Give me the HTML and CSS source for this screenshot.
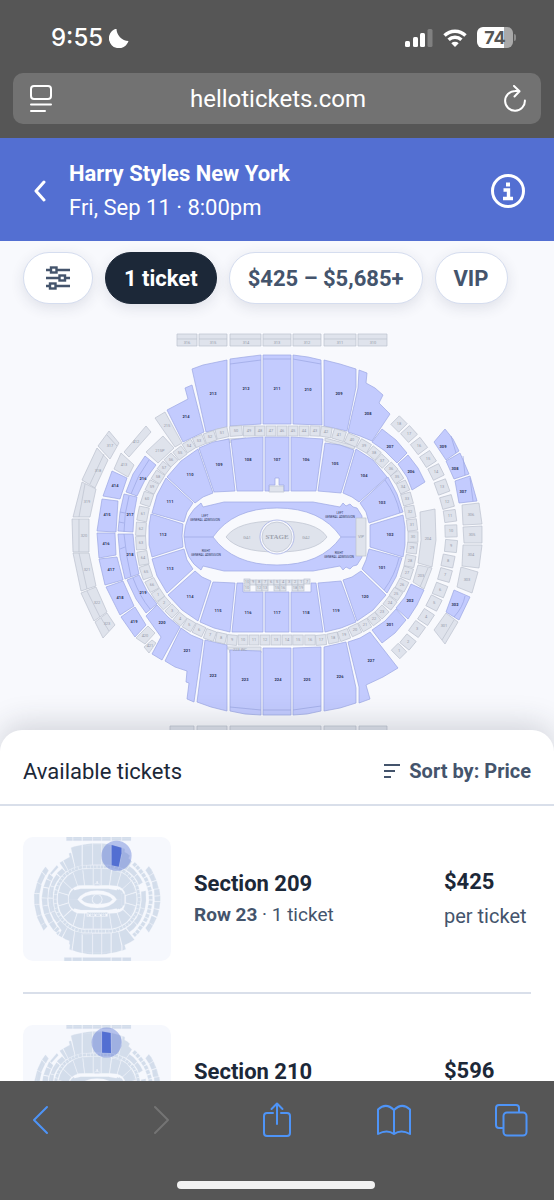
FILE: index.html
```html
<!DOCTYPE html>
<html lang="en">
<head>
  <meta charset="UTF-8">
  <meta name="viewport" content="width=device-width, initial-scale=1">
  <title>Harry Styles New York</title>
  <link rel="stylesheet" href="styles.css">
</head>
<body>
  <div class="browser-top">
    <div class="status">
      <span class="time">9:55</span>
      <svg class="moon" width="20" height="20" viewBox="0 0 20 20"><path d="M7.500 0.500A10 10 0 1 0 19.500 13A12.500 12.500 0 0 1 7.500 .5Z" fill="#fff"/></svg>
      <span class="spacer"></span>
      <svg width="28" height="20" viewBox="0 0 28 20" fill="#fff">
        <rect x="0" y="13" width="5" height="6" rx="1.500"/>
        <rect x="8" y="9" width="5" height="10" rx="1.500"/>
        <rect x="15" y="5" width="5" height="14" rx="1.500"/>
        <rect x="22.500" y="1" width="5" height="18" rx="1.500" opacity=".25"/>
      </svg>
      <svg width="24" height="20" viewBox="0 0 24 20" fill="none" stroke="#fff" stroke-width="3.400">
        <path d="M1.500 7.500A15 15 0 0 1 22.500 7.500"/>
        <path d="M5.600 11.800A9.300 9.300 0 0 1 18.400 11.800"/>
        <path d="M12 19L8.300 15.200A5.500 5.500 0 0 1 15.700 15.200Z" fill="#fff" stroke="none"/>
      </svg>
      <span class="battery">74</span>
    </div>
    <div class="url-bar">
      <button type="button" aria-label="Page settings">
        <svg width="22" height="28" viewBox="0 0 22 28" fill="none" stroke="#fff" stroke-width="2" stroke-linecap="round"><rect x="1" y="1" width="20" height="13" rx="3"/><path d="M1 19.500H21M1 26H15"/></svg>
      </button>
      <input type="text" value="hellotickets.com" aria-label="Address">
      <button type="button" aria-label="Reload">
        <svg width="22" height="28" viewBox="0 0 22 28" fill="none" stroke="#fff" stroke-width="2" stroke-linecap="round" stroke-linejoin="round"><path d="M15.500 6.300Q13 5.900 11 6A9.900 9.900 0 1 0 20.900 15.500M10 1L15.500 6.300L10.500 11.500"/></svg>
      </button>
    </div>
  </div>

  <header class="event">
    <a class="back" href="#" aria-label="Back"><svg width="12" height="24" viewBox="0 0 12 24" fill="none" stroke="#fff" stroke-width="3" stroke-linecap="round" stroke-linejoin="round"><path d="M10 3L2 12L10 21"/></svg></a>
    <div class="event-text">
      <h1>Harry Styles New York</h1>
      <p>Fri, Sep 11 · 8:00pm</p>
    </div>
    <button class="info" type="button" aria-label="Event info">
      <svg width="36" height="36" viewBox="0 0 36 36" fill="none" stroke="#fff"><circle cx="18" cy="18" r="15.500" stroke-width="3"/><path d="M13.500 17H18.500V25M13 25.500H23" stroke-width="3.400"/><path d="M16 9.500H20V13.500H16Z" fill="#fff" stroke="none"/></svg>
    </button>
  </header>

  <main>
    <section class="venue">
      <div class="filters">
        <button class="chip" type="button" aria-label="Filters">
          <svg width="24" height="24" viewBox="0 0 24 24" fill="none" stroke="#44546c" stroke-width="2.400"><path d="M0 4H5M11 4H24M0 12H13M19 12H24M0 20H4M10 20H24"/><rect x="5" y="1.500" width="5.500" height="5"/><rect x="13.500" y="9.500" width="5.500" height="5"/><rect x="4" y="17.500" width="5.500" height="5"/></svg>
        </button>
        <button class="chip active" type="button">1 ticket</button>
        <button class="chip" type="button">$425 – $5,685+</button>
        <button class="chip" type="button">VIP</button>
      </div>
      <svg class="map" viewBox="0 241 554 513" role="img" aria-label="Seating map">
        <g id="arena"></g>
        <g id="labels"></g>
      </svg>
    </section>

    <section class="sheet">
      <div class="sheet-head">
        <h2>Available tickets</h2>
        <button class="sort" type="button">
          <svg width="16" height="16" viewBox="0 0 16 16" fill="none" stroke="#44546c" stroke-width="2"><path d="M0 2H16M0 8H11M0 14H7"/></svg>
          Sort by: Price
        </button>
      </div>
      <ul class="tickets">
        <li>
          <svg class="thumb" viewBox="38 334 477 403">
            <use href="#arena"/>
            <circle class="halo" cx="340" cy="395" r="49"/>
            <path class="pick" d="M324 360L356 369V387L347 431L324 426Z"/>
          </svg>
          <div class="seat">
            <h3>Section 209</h3>
            <p><b>Row 23</b> · 1 ticket</p>
          </div>
          <div class="price">
            <strong>$425</strong>
            <span>per ticket</span>
          </div>
        </li>
        <li>
          <svg class="thumb" viewBox="38 334 477 403">
            <use href="#arena"/>
            <circle class="halo" cx="308" cy="391" r="49"/>
            <path class="pick" d="M293 355L321 360L322 425L293 424Z"/>
          </svg>
          <div class="seat">
            <h3>Section 210</h3>
          </div>
          <div class="price">
            <strong>$596</strong>
          </div>
        </li>
      </ul>
    </section>
  </main>

  <nav class="toolbar">
    <div class="tools">
      <button type="button" aria-label="Previous page"><svg width="36" height="36" viewBox="0 0 36 36"><path d="M24 5L11 18L24 31"/></svg></button>
      <button type="button" aria-label="Next page" disabled><svg width="36" height="36" viewBox="0 0 36 36"><path d="M14 5L27 18L14 31"/></svg></button>
      <button type="button" aria-label="Share"><svg width="36" height="36" viewBox="0 0 36 36"><path d="M15 11H9Q6 11 6 14V31Q6 34 9 34H29Q32 34 32 31V14Q32 11 29 11H23M19 22V2M13.500 7L19 1.500L24.500 7"/></svg></button>
      <button type="button" aria-label="Bookmarks"><svg width="36" height="36" viewBox="0 0 36 36"><path d="M18 8Q10 0 2 7.500V32Q11 27 18 32Q25 27 34 32V7.500Q26 0 18 8ZM18 8V32"/></svg></button>
      <button type="button" aria-label="Tabs"><svg width="36" height="36" viewBox="0 0 36 36"><path d="M9.500 26H6Q3 26 3 23V6Q3 3 6 3H23Q26 3 26 6V9.500"/><rect x="10.500" y="10.500" width="23" height="23" rx="3.500"/></svg></button>
    </div>
    <div class="home"></div>
  </nav>
  <script src="map.js"></script>
</body>
</html>
```

FILE: styles.css
```css
* {
  box-sizing: border-box;
}
body {
  margin: 0;
  height: 100vh;
  display: flex;
  flex-direction: column;
  font-family: Roboto, "Liberation Sans", sans-serif;
  color: #1c2838;
  background: #fff;
}
h1, h2, h3, p, ul {
  margin: 0;
  padding: 0;
}
button {
  font: inherit;
  color: inherit;
  background: none;
  border: 0;
  padding: 0;
}
svg {
  display: block;
}

/* browser chrome */
.browser-top {
  background: #565656;
  padding: 0 13px 14px;
  font-family: Inter, "Liberation Sans", sans-serif;
  color: #fff;
}
.status {
  height: 73px;
  padding: 2px 28px 0 38px;
  display: flex;
  align-items: center;
  gap: 10px;
}
.time {
  font-size: 24px;
  font-weight: 500;
}
.moon {
  margin-left: -4px;
}
.spacer {
  flex: 1;
}
.battery {
  position: relative;
  width: 36px;
  height: 21px;
  border-radius: 6px;
  background: linear-gradient(90deg, #fff 74%, #a9a9a9 74%);
  color: #565656;
  font-size: 18px;
  font-weight: 700;
  line-height: 21px;
  text-align: center;
}
.battery::after {
  content: "";
  position: absolute;
  right: -3px;
  top: 7px;
  width: 2px;
  height: 7px;
  border-radius: 0 2px 2px 0;
  background: #8d8d8d;
}
.url-bar {
  height: 51px;
  border-radius: 10px;
  background: #727272;
  display: flex;
  align-items: center;
  padding: 0 15px 0 17px;
}
.url-bar input {
  flex: 1;
  min-width: 0;
  border: 0;
  background: none;
  color: #fff;
  font-family: Roboto, "Liberation Sans", sans-serif;
  font-size: 24px;
  text-align: center;
}

/* event header */
.event {
  background: #536fd2;
  color: #fff;
  height: 103px;
  flex: none;
  display: flex;
  align-items: center;
  padding: 2px 28px 0 34px;
}
.event-text {
  flex: 1;
  margin-left: 23px;
}
.event h1 {
  font-size: 22px;
  font-weight: 700;
  line-height: 34px;
}
.event p {
  font-size: 22px;
  line-height: 34px;
}

main {
  flex: 1;
  min-height: 0;
  overflow: hidden;
}
.venue {
  position: relative;
  background: #f8f9fd;
}
.map {
  width: 100%;
  height: auto;
  --open: #c3cbfe;
  --open-line: #9ba6e2;
  --closed: #dfe3ec;
  --closed-line: #bcc2cf;
  --paper: #f8f9fd;
}
.filters {
  position: absolute;
  top: 11px;
  left: 23px;
  right: 0;
  display: flex;
  gap: 12px;
}
.chip {
  height: 52px;
  padding: 0 18px;
  border: 1px solid #d5ddef;
  border-radius: 26px;
  background: #fff;
  color: #44546c;
  font-size: 22px;
  font-weight: 700;
  box-shadow: 0 4px 14px rgba(40, 50, 80, 0.12);
}
.chip svg {
  margin: 0 4px;
}
.chip.active {
  background: #1c2838;
  border-color: #1c2838;
  color: #fff;
}

/* seating map */
.open {
  fill: var(--open);
  stroke: var(--open-line);
  stroke-width: 0.7;
}
.closed {
  fill: var(--closed);
  stroke: var(--closed-line);
  stroke-width: 0.7;
}
.paper {
  fill: var(--paper);
  stroke: var(--open-line);
  stroke-width: 0.7;
}
.band {
  fill: none;
  stroke: var(--open-line);
  stroke-width: 0.7;
}
.band.off {
  stroke: var(--closed-line);
}
#labels text {
  font-size: 4px;
  text-anchor: middle;
  fill: #969ba8;
}
#labels .on {
  font-weight: 700;
  fill: #2b3358;
}
#labels .tiny {
  font-size: 3px;
  fill: #2b3358;
}
#labels .stage {
  font-family: "Liberation Serif", serif;
  font-size: 7px;
  font-weight: 700;
  fill: #9da2ad;
}

/* ticket list */
.sheet {
  position: relative;
  margin-top: -24px;
  background: #fff;
  border-radius: 22px 22px 0 0;
  box-shadow: 0 -6px 30px rgba(40, 45, 60, 0.18);
}
.sheet-head {
  height: 76px;
  padding: 8px 23px 0;
  border-bottom: 2px solid #d9dfea;
  display: flex;
  align-items: center;
  justify-content: space-between;
}
.sheet-head h2 {
  font-size: 22px;
  font-weight: 400;
}
.sort {
  display: flex;
  align-items: center;
  gap: 9px;
  font-size: 20px;
  font-weight: 700;
  color: #44546c;
}
.tickets {
  list-style: none;
  padding: 0 23px;
}
.tickets li {
  display: flex;
  align-items: center;
  padding: 31px 0;
  border-bottom: 2px solid #d9dfea;
}
.thumb {
  width: 148px;
  height: 124px;
  flex: none;
  border-radius: 10px;
  background: #f6f8fd;
  --open: #d3ddeb;
  --open-line: #e6ecf5;
  --closed: #d3ddeb;
  --closed-line: #e6ecf5;
  --paper: #f6f8fd;
}
.halo {
  fill: #536fd2;
  opacity: 0.4;
}
.pick {
  fill: #536fd2;
}
.seat {
  flex: 1;
  min-height: 62px;
  margin-left: 23px;
}
.seat h3 {
  font-size: 22px;
  line-height: 32px;
}
.seat p {
  font-size: 19px;
  line-height: 30px;
  color: #44546c;
}
.price {
  width: 87px;
  min-height: 66px;
}
.price strong, .price span {
  display: block;
  white-space: nowrap;
}
.price strong {
  font-size: 22px;
  line-height: 34px;
}
.price span {
  font-size: 20px;
  line-height: 34px;
  color: #44546c;
}

/* bottom toolbar */
.toolbar {
  flex: none;
  height: 119px;
  background: #565656;
  padding: 21px 25px 0 23px;
}
.tools {
  display: flex;
  justify-content: space-between;
}
.tools svg {
  fill: none;
  stroke: #4e94f7;
  stroke-width: 2;
  stroke-linecap: round;
  stroke-linejoin: round;
}
.tools button:disabled svg {
  stroke: #747474;
}
.home {
  width: 198px;
  height: 8px;
  margin: 43px auto 0;
  border-radius: 4px;
  background: #f2f2f2;
}
```

FILE: map.js
```js
const arena = document.getElementById('arena');
const labels = document.getElementById('labels');
let shapes = '';
let texts = '';

function label(text, x, y, cls) {
  texts += `<text class="${cls || ''}" x="${x}" y="${y + 1.4}">${text}</text>`;
}

// name, points, label position
const open = [
  ['213', '192,369 203,365 227,360 227,427 206,432', 213, 394],
  ['212', '230,359 245,357 261,355 261,424 230,426', 246, 389],
  ['211', '263,355 291,355 291,424 263,424', 277, 389],
  ['210', '293,355 308,357 321,360 322,425 293,424', 308, 390],
  ['209', '324,360 340,364 356,369 356,387 347,431 324,426', 339, 394],
  ['208', '359,370 367,373 366,383 375,388 383,395 379,403 390,414 372,441 360,436 348,432 358,388', 368, 414],
  ['207', '382,429 396,440 407,453 397,463 385,451 372,442', 390, 447],
  ['206', '408,455 418,468 425,482 412,490 407,477 398,464', 411, 472],
  ['214', '185,388 192,385 204,432 183,442 167,410 188,399', 186, 417],
  ['216', '145,456 156,465 145,480 137,496 126,492 133,474', 143, 479],
  ['217', '124,494 137,497 134,514 133,532 118,531 120,512', 130, 515],
  ['218', '118,534 133,534 135,555 139,574 125,579 120,557', 130, 555],
  ['219', '127,580 139,575 147,591 157,604 146,613 136,599', 143, 593],
  ['220', '157,605 168,617 180,627 162,660 152,654 161,637 146,616', 162, 623],
  ['221', '181,628 191,635 203,640 194,702 187,699 189,683 186,682 187,671 175,667 165,661', 187, 651],
  ['222', '205,640 227,645 227,711 211,707 197,702', 213, 676],
  ['223', '230,650 261,651 261,715 245,714 230,711', 245, 680],
  ['224', '263,648 291,648 291,715 263,715', 278, 680],
  ['225', '293,648 321,647 321,711 307,714 293,715', 307, 680],
  ['226', '324,647 346,642 356,688 356,703 340,708 324,711', 340, 677],
  ['227', '348,642 360,638 370,632 398,668 383,677 366,685 370,699 359,703 359,687', 371, 661],
  ['201', '372,630 385,621 396,609 406,620 395,633 382,643', 390, 625],
  ['202', '396,608 405,597 411,584 424,590 417,605 408,619', 410, 601],
  ['107', '265,437 289,437 289,491 284,491 284,485 279,485 279,478 275,478 275,485 269,485 269,491 265,491', 277, 460],
  ['108', '231,440 246,438 263,437 263,491 237,491', 248, 460],
  ['109', '199,448 213,442 229,439 235,491 214,492', 219, 465],
  ['110', '198,449 213,493 203,497 195,503 167,477 181,461', 190, 475],
  ['111', '166,478 193,503 187,512 184,522 152,513 157,495', 170, 502],
  ['112', '151,514 183,524 182,536 183,547 152,557 149,545 149,526', 163, 535],
  ['113', '152,559 184,549 187,560 193,569 167,593 157,576', 170, 569],
  ['114', '195,571 202,577 211,581 198,621 182,610 168,595', 190, 597],
  ['115', '213,582 235,583 230,632 214,628 200,622', 218, 611],
  ['116', '237,583 243,583 243,592 263,592 263,632 232,632', 248, 613],
  ['117', '265,592 289,592 289,632 265,632', 277, 613],
  ['118', '291,592 311,592 311,583 316,583 323,632 291,632', 306, 613],
  ['119', '318,583 341,581 356,622 341,628 325,632', 336, 611],
  ['120', '343,580 352,577 361,571 386,595 373,610 357,621', 365, 597],
  ['101', '369,549 402,558 396,577 387,593 362,569 366,560', 382, 568],
  ['102', '370,525 403,515 405,527 405,545 403,557 370,547', 390, 535],
  ['103', '388,477 397,494 403,512 369,523 366,512 360,503', 382, 503],
  ['104', '356,449 373,460 387,477 359,502 352,497 343,493', 364, 476],
  ['105', '325,443 340,445 354,450 341,493 318,491', 335, 464],
  ['106', '291,437 323,439 316,491 291,491', 306, 460],
  ['414', '112,471 127,478 120,499 103,496', 115, 486],
  ['415', '102,499 118,501 116,532 97,531', 107, 515],
  ['416', '97,533 115,533 116,555 99,558', 106, 544],
  ['417', '99,559 117,557 123,580 105,585', 111, 570],
  ['418', '106,587 123,581 134,606 120,615', 120, 598],
  ['419', '121,617 135,607 146,625 135,637', 134, 622],
  ['309', '445,429 453,439 459,451 446,460 434,442', 443, 447],
  ['308', '460,453 469,474 454,479 446,461', 455, 469],
  ['307', '470,476 477,501 459,503 455,481', 463, 492],
  ['302', '454,590 470,597 459,620 446,612', 455, 605]
];

const closed = [
  ['215', '155,418 165,412 182,443 175,447', 167, 426],
  ['215P', '146,452 163,436 174,448 158,463', 160, 451],
  ['203', '413,582 418,565 432,568 424,589', 421, 576],
  ['204', '420,512 435,509 436,540 432,567 418,563 421,540', 428, 539],
  ['317', '109,431 119,443 110,459 98,446', 110, 446],
  ['318', '97,448 108,460 95,488 82,480', 98, 471],
  ['319', '82,482 96,489 90,517 73,517', 87, 502],
  ['320', '72,519 89,519 89,552 73,552', 84, 536],
  ['321', '73,553 89,553 96,586 81,591', 87, 570],
  ['322', '81,593 96,587 107,612 94,621', 97, 603],
  ['323', '95,622 107,613 115,625 103,638', 107, 624],
  ['412', '146,426 151,432 129,457 124,452', 136, 442],
  ['413', '121,453 134,465 128,477 114,469', 124, 465],
  ['420', '136,638 148,626 155,633 145,644', 145, 636],
  ['421', '144,647 152,640 156,643 149,653', 150, 646],
  ['306', '462,505 479,503 482,524 463,525', 471, 515],
  ['305', '463,527 482,526 482,543 464,543', 472, 535],
  ['304', '463,545 482,545 479,568 462,566', 471, 555],
  ['303', '461,567 478,572 472,593 457,587', 467, 580],
  ['301', '446,613 458,622 445,644 434,630', 444, 626],
  ['', '325,438 355,446 354,449 325,441'],
  ['', '214,443 228,439 246,438 246,441 232,442 215,445'],
  ['223 WC', '212,644 228,647 261,647 261,653 230,653 229,649 212,648', 240, 650],
  ['316', '177,334 197,334 197,346 177,346', 187, 343],
  ['315', '199,334 227,334 227,346 199,346', 213, 343],
  ['314', '230,334 261,334 261,346 230,346', 246, 343],
  ['313', '263,334 291,334 291,346 263,346', 277, 343],
  ['312', '293,334 321,334 321,346 293,346', 307, 343],
  ['311', '324,334 356,334 356,346 324,346', 340, 343],
  ['310', '358,334 387,334 387,346 358,346', 373, 343],
  ['', '170,726 194,726 194,737 170,737'],
  ['', '197,726 227,726 227,737 197,737'],
  ['', '230,726 321,726 321,737 230,737'],
  ['', '324,726 356,726 356,737 324,737'],
  ['', '359,726 387,726 387,737 359,737'],
  ['', '269,486 284,486 284,492 269,492']
];

function draw(list, cls, textCls) {
  for (const [name, points, x, y] of list) {
    shapes += `<polygon class="${cls}" points="${points}"/>`;
    if (name) label(name, x, y, textCls);
  }
}

// boxes that follow a line of centres, each turned to its neighbours
function row(centres, first, step, depth, loop) {
  const n = centres.length;
  centres.forEach(([x, y], i) => {
    const prev = centres[i - 1] || (loop ? centres[n - 1] : null);
    const next = centres[i + 1] || (loop ? centres[0] : null);
    const a = prev || [x, y];
    const b = next || [x, y];
    const len = Math.hypot(b[0] - a[0], b[1] - a[1]) / (prev && next ? 2 : 1);
    const turn = Math.atan2(b[1] - a[1], b[0] - a[0]) * 180 / Math.PI;
    const w = len - (loop ? 1.2 : 3);
    shapes += `<rect class="closed" x="${x - w / 2}" y="${y - depth / 2}" width="${w}" height="${depth}" transform="rotate(${turn} ${x} ${y})"/>`;
    label(first + i * step, x, y);
  });
}

draw(closed, 'closed');
draw(open, 'open', 'on');

row([
  [158, 595], [164, 603], [172, 611], [180, 619], [189, 625], [199, 630], [210, 635], [221, 638],
  [232, 640], [243, 640], [254, 640], [265, 640], [276, 640], [287, 640], [298, 640], [310, 640],
  [321, 640], [333, 638], [344, 635], [355, 630], [365, 625], [374, 619], [382, 612], [390, 603],
  [396, 594], [402, 585], [407, 573], [410, 561], [412, 548], [413, 537], [412, 525], [410, 512],
  [407, 499], [403, 487], [397, 477], [391, 469], [382, 461], [374, 453], [364, 446], [352, 440],
  [339, 435], [326, 432], [315, 431], [304, 431], [293, 431], [282, 431], [271, 431], [260, 431],
  [249, 431], [236, 431], [222, 433], [210, 437], [199, 441], [189, 446], [180, 453], [171, 460],
  [164, 468], [158, 477], [152, 487], [147, 499], [143, 514], [141, 529], [141, 543], [143, 558],
  [146, 572], [152, 585]
], 1, 1, 10, true);

row([
  [399, 651], [408, 642], [417, 629], [426, 617], [434, 603], [440, 590], [445, 575], [448, 561],
  [451, 546], [451, 531], [450, 516], [447, 502], [442, 487], [436, 472], [428, 459], [419, 446],
  [409, 434], [399, 424]
], 1, 1, 12, false);

// front rows by the floor
for (let i = 0; i < 11; i++) {
  shapes += `<rect class="closed" x="${244 + i * 6}" y="${i % 10 ? 580 : 579}" width="6" height="5"/>`;
  label([10, 9, 8, 7, 6, 5, 4, 3, 2, 1, 7][i], 247 + i * 6, 582);
  if (i % 3 !== 1) {
    shapes += `<rect class="closed" x="${244 + i * 6}" y="585" width="6" height="6"/>`;
    label(10 + i, 247 + i * 6, 588);
  }
}

// darker rows at the back of a section
shapes += `
  <path class="band" d="M230 364L261 360M263 359H291M293 359L321 364M230 707L261 710M263 710H291M293 710L321 706
    M149 460Q137 476 131 494M129 496Q124 514 124 532M120 512L125 513M119 522L124 523M124 534Q126 556 131 577M120 549L125 547M133 578Q140 597 150 609
    M385 480Q396 495 400 513M399 558Q395 575 384 590M451 436L456 453M463 456L465 475M470 478L473 501M465 596Q463 607 454 617"/>
  <path class="band off" d="M177 339H197M199 339H227M230 339H261M263 339H291M293 339H321M324 339H356M358 339H387
    M107 435L117 446M104 454L90 484M85 484L79 517M79 519V552M79 553L87 589M87 591L100 617M101 618L109 631M428 568L420 587M454 620L442 640"/>
  <path class="open" d="M184 536Q185 514 201 503L203 507L224 502H313L340 507L343 503L346 506L350 504L353 507L357 508L362 516V557L357 565L353 566L350 569L346 567L343 570L340 566L313 571H224L203 566L201 570Q185 560 184 536Z"/>
  <path class="paper" d="M213 537Q233 508 277 508T341 537Q321 565 277 565T213 537Z"/>
  <path class="band" d="M184 537H213M341 537H357"/>
  <path class="closed" d="M226 537Q237 521 277 521T327 537Q316 552 277 552T226 537Z"/>
  <circle class="paper" cx="277" cy="537" r="17"/>
  <circle class="closed" cx="277" cy="537" r="15"/>
  <rect class="closed" x="356" y="518" width="10" height="38"/>`;

label('STAGE', 277, 538, 'stage');
label('GA1', 247, 538);
label('GA2', 306, 538);
label('VIP', 361, 537);
for (const [side, x, y] of [['LEFT', 205, 516], ['LEFT', 340, 513], ['RIGHT', 206, 551], ['RIGHT', 339, 553]]) {
  label(side, x, y, 'tiny');
  label('GENERAL ADMISSION', x, y + 4, 'tiny');
}

arena.innerHTML = shapes;
labels.innerHTML = texts;
```
